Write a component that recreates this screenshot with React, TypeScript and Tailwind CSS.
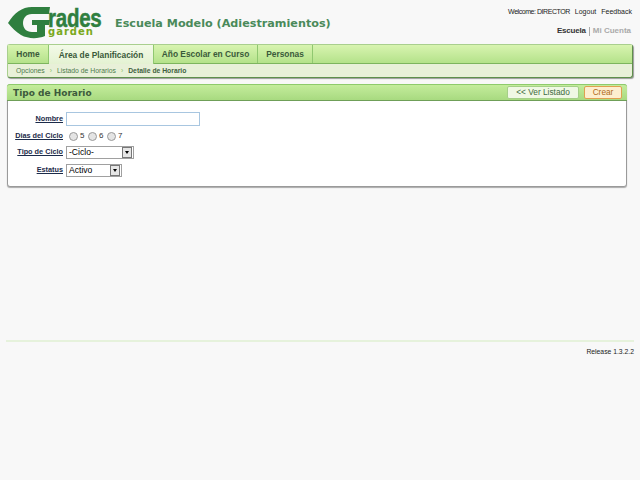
const font = { fontFamily: '"Liberation Sans", Arial, sans-serif' };

function Logo() {
  return (
    <div className="relative w-[96px] h-[32px]">
      <svg width="44" height="32" viewBox="0 0 44 32" className="absolute left-0 top-0">
        <path d="M0 16 C6 6 14 0 24 0 L42 0 L41 7 L24 7 C18 7 15 11 15 16 C15 21 18 25 24 25 L29 25 L29 18 L24 18 L24 13 L42 13 L41 18 L37 18 L37 29 C30 32 20 32 13 28 C8 25 4 21 0 16 Z" fill="#2f7f3f" />
      </svg>
      <span className="absolute left-[40px] top-[2px] text-[25px] leading-[18px] font-bold text-[#2f7f3f] tracking-[-0.3px] scale-x-[0.82] origin-left [-webkit-text-stroke:0.5px_#2f7f3f]">rades</span>
      <span className="absolute left-[40px] top-[21px] text-[10px] leading-[7px] font-bold text-[#7aa820] tracking-[1px]" style={{ fontFamily: '"DejaVu Sans", sans-serif' }}>garden</span>
    </div>
  );
}

function Field({ label, h, children }: { label: string; h: string; children: React.ReactNode }) {
  return (
    <div className={`flex items-center ${h}`}>
      <label className="w-[53px] text-[7.3px] font-bold underline text-[#1c2b4a] whitespace-nowrap flex justify-end">{label}</label>
      <div className="ml-[3px] flex items-center">{children}</div>
    </div>
  );
}

function Radio({ n }: { n: string }) {
  return (
    <div className="flex items-center w-[19px]">
      <span className="w-[9px] h-[9px] rounded-full border border-[#9a9a9a] bg-[#e4e4e4] ml-[3px]" />
      <span className="ml-[2px] text-[8px] text-[#333]">{n}</span>
    </div>
  );
}

function Select({ value, width }: { value: string; width: string }) {
  return (
    <div className={`${width} h-[13px] flex items-center justify-between border border-[#a0a0a0] bg-white`}>
      <span className="pl-[2px] text-[8.6px] leading-none text-black">{value}</span>
      <span className="w-[10px] h-[11px] mr-px flex items-center justify-center bg-[#e6e6e6] border border-[#777]">
        <span className="w-0 h-0 border-x-[2px] border-x-transparent border-t-[3px] border-t-black" />
      </span>
    </div>
  );
}

export default function App() {
  return (
    <div style={font} className="w-[640px] h-[480px] bg-[#f8f8f8] overflow-hidden">
      {/* cabecera */}
      <div className="flex h-[44px] pl-[8px] pr-[8px] pt-[7px]">
        <Logo />
        <h1 className="ml-[11px] mt-[10px] text-[11.2px] leading-[14px] font-bold text-[#4a8a5a] whitespace-nowrap" style={{ fontFamily: '"DejaVu Sans", sans-serif' }}>
          Escuela Modelo (Adiestramientos)
        </h1>
        <div className="ml-auto flex flex-col items-end">
          <div className="flex gap-[5px] text-[7px] leading-[9px] text-[#222]">
            <span className="tracking-[-0.45px]">Welcome: DIRECTOR</span>
            <span>Logout</span>
            <span>Feedback</span>
          </div>
          <div className="flex items-center mt-[10px] mr-px text-[8px] font-bold leading-[10px]">
            <span className="text-[#333] tracking-[-0.2px]">Escuela</span>
            <span className="mx-[3px] w-px h-[9px] bg-[#aaa]" />
            <span className="text-[#aaa]">Mi Cuenta</span>
          </div>
        </div>
      </div>

      {/* menu */}
      <div className="ml-[7px] w-[626px] h-[34px] rounded-[3px] border border-[#a9cf8e] border-r-[#5f8f4c] border-b-[#5f8f4c] bg-[#e8f0d8] shadow-[1px_1px_1px_#999]">
        <div className="flex h-[19px] bg-gradient-to-b from-[#d8f4b0] to-[#b4e28a] border-b border-[#7db55e] text-[8.4px] font-bold text-[#3a5a3a]">
          <div className="w-[41px] pt-px flex items-center justify-center border-r border-[#90c870]">Home</div>
          <div className="w-[105px] h-[19px] pt-px flex items-center justify-center border-r border-[#90c870] bg-gradient-to-b from-[#f3fae8] to-[#e4f2d2]">Área de Planificación</div>
          <div className="w-[104px] pt-px flex items-center justify-center border-r border-[#90c870]">Año Escolar en Curso</div>
          <div className="w-[55px] pt-px flex items-center justify-center border-r border-[#90c870]">Personas</div>
        </div>
        <div className="flex items-center h-[13px] pl-[8px] pt-px text-[6.8px] text-[#4d7a4d]">
          <span>Opciones</span>
          <span className="mx-[5px] text-[#8cbf6c]">›</span>
          <span>Listado de Horarios</span>
          <span className="mx-[5px] text-[#8cbf6c]">›</span>
          <span className="font-bold text-[#3f5f3f]">Detalle de Horario</span>
        </div>
      </div>

      {/* panel */}
      <div className="ml-[7px] mt-[6px] w-[620px] h-[103px] rounded-[3px] border border-[#9a9a9a] bg-white shadow-[0_1px_1px_#aaa]">
        <div className="flex items-center justify-between h-[17px] -mx-px -mt-px rounded-t-[3px] bg-gradient-to-b from-[#c4ec9c] to-[#a8da80] border-t border-t-[#8ecb6c] border-b border-b-[#6f9f58] pl-[6px] pr-[5px]">
          <span className="pt-[2px] text-[9px] font-bold text-[#3c5a3c]" style={{ fontFamily: '"DejaVu Sans", sans-serif' }}>Tipo de Horario</span>
          <div className="flex gap-[5px]">
            <button className="w-[72px] h-[13px] flex items-center justify-center rounded-[2px] border border-[#a5cf88] bg-[#f0f8e4] text-[8.3px] leading-none text-[#3f6a3f]">&lt;&lt; Ver Listado</button>
            <button className="w-[38px] h-[13px] flex items-center justify-center rounded-[2px] border border-[#e0a050] bg-[#fdeecf] text-[8.3px] leading-none text-[#b06a1a]">Crear</button>
          </div>
        </div>
        <div className="pt-[9px] pl-[2px]">
          <Field label="Nombre" h="h-[18px]">
            <div className="w-[134px] h-[14px] border border-[#a8c6e0] bg-white" />
          </Field>
          <Field label="Dias del Ciclo" h="h-[16px]">
            <Radio n="5" />
            <Radio n="6" />
            <Radio n="7" />
          </Field>
          <Field label="Tipo de Ciclo" h="h-[17px]">
            <Select value="-Ciclo-" width="w-[68px]" />
          </Field>
          <Field label="Estatus" h="h-[18px]">
            <Select value="Activo" width="w-[56px]" />
          </Field>
        </div>
      </div>

      {/* pie */}
      <div className="mt-[153px] ml-[6px] w-[628px] h-[2px] bg-[#e6f2dc]" />
      <div className="mt-[5px] w-[634px] text-right text-[6.8px] leading-[9px] text-[#222]">Release 1.3.2.2</div>
    </div>
  );
}
